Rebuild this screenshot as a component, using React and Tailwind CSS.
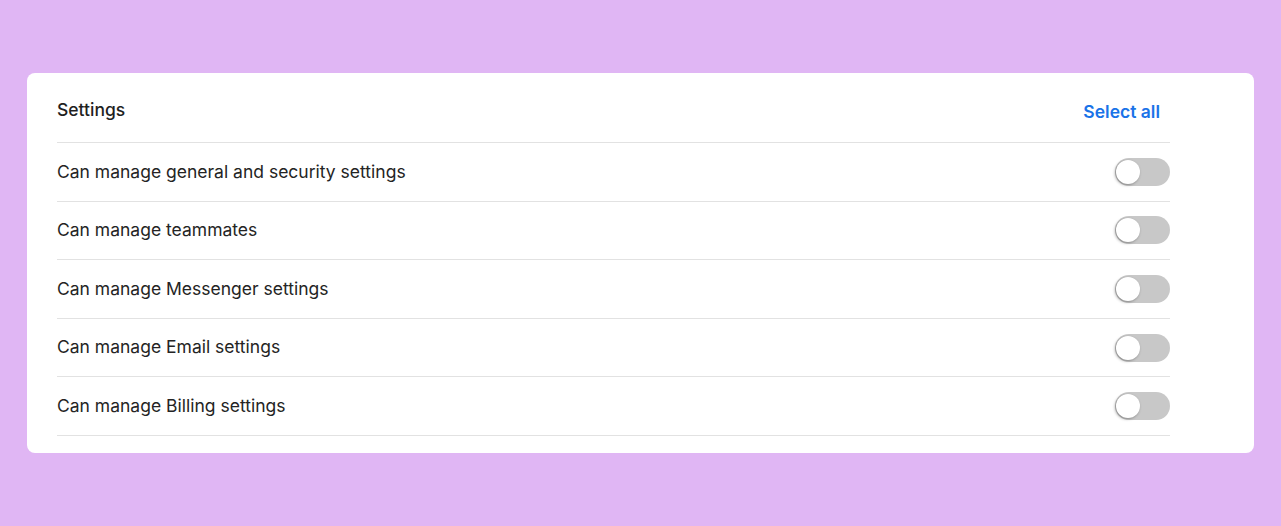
import { useState } from 'react';

const permissions = [
  'Can manage general and security settings',
  'Can manage teammates',
  'Can manage Messenger settings',
  'Can manage Email settings',
  'Can manage Billing settings',
];

const Toggle = ({ on, onClick }) => (
  <button
    type="button"
    onClick={onClick}
    className={`relative w-[55px] h-[28px] rounded-full transition-colors ${
      on ? 'bg-[#1a73e8]' : 'bg-[#c8c8c8]'
    }`}
  >
    <span
      className={`absolute top-[2px] left-[1px] h-[24px] w-[24px] rounded-full bg-white shadow-[-1px_1px_3px_rgba(0,0,0,0.35)] transition-transform ${
        on ? 'translate-x-[29px]' : ''
      }`}
    />
  </button>
);

const App = () => {
  const [checked, setChecked] = useState(permissions.map(() => false));

  const flip = (i) => setChecked((prev) => prev.map((v, j) => (j === i ? !v : v)));

  return (
    <div
      className="min-h-[526px] bg-[#e0b6f4] pt-[73px] pl-[27px]"
      style={{ fontFamily: 'Inter, "Noto Sans", sans-serif' }}
    >
      <div className="w-[1227px] h-[380px] bg-white rounded-[8px] pl-[30px] pr-[84px]">
        <div className="flex justify-between pt-[25px] pb-[18px] border-b border-[#e2e2e2]">
          <h2 className="text-[17.5px] leading-[24px] font-medium text-[#1f1f1f]">Settings</h2>
          <button
            type="button"
            onClick={() => setChecked(permissions.map(() => true))}
            className="mt-[2px] mr-[10px] text-[17.5px] leading-[24px] font-semibold text-[#1a73e8]"
          >
            Select all
          </button>
        </div>
        {permissions.map((label, i) => (
          <div
            key={label}
            className="flex items-center justify-between h-[58.6px] border-b border-[#e2e2e2]"
          >
            <span className="text-[17.5px] text-[#242424]">{label}</span>
            <Toggle on={checked[i]} onClick={() => flip(i)} />
          </div>
        ))}
      </div>
    </div>
  );
};

export default App;
